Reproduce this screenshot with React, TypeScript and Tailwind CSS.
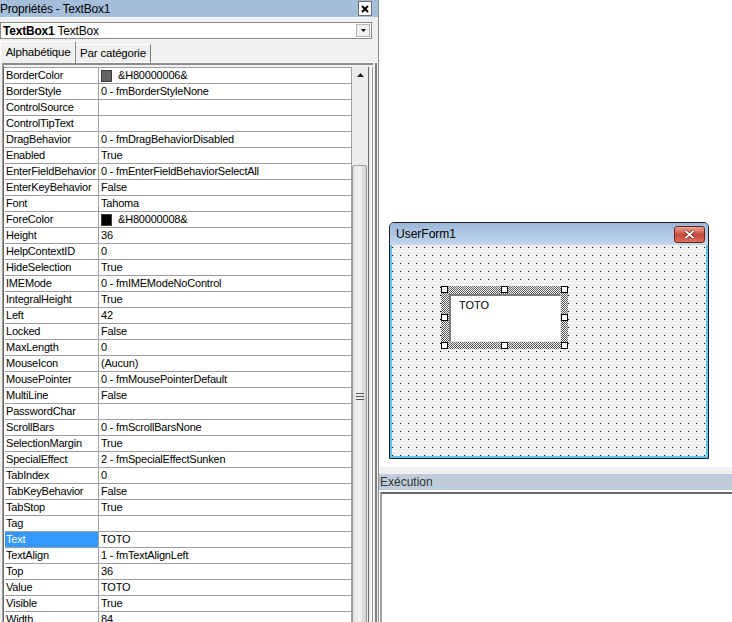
type Row = { name: string; value: string; swatch?: string; selected?: boolean }

const rows: Row[] = [
  { name: 'BorderColor', value: '&H80000006&', swatch: '#646464' },
  { name: 'BorderStyle', value: '0 - fmBorderStyleNone' },
  { name: 'ControlSource', value: '' },
  { name: 'ControlTipText', value: '' },
  { name: 'DragBehavior', value: '0 - fmDragBehaviorDisabled' },
  { name: 'Enabled', value: 'True' },
  { name: 'EnterFieldBehavior', value: '0 - fmEnterFieldBehaviorSelectAll' },
  { name: 'EnterKeyBehavior', value: 'False' },
  { name: 'Font', value: 'Tahoma' },
  { name: 'ForeColor', value: '&H80000008&', swatch: '#000000' },
  { name: 'Height', value: '36' },
  { name: 'HelpContextID', value: '0' },
  { name: 'HideSelection', value: 'True' },
  { name: 'IMEMode', value: '0 - fmIMEModeNoControl' },
  { name: 'IntegralHeight', value: 'True' },
  { name: 'Left', value: '42' },
  { name: 'Locked', value: 'False' },
  { name: 'MaxLength', value: '0' },
  { name: 'MouseIcon', value: '(Aucun)' },
  { name: 'MousePointer', value: '0 - fmMousePointerDefault' },
  { name: 'MultiLine', value: 'False' },
  { name: 'PasswordChar', value: '' },
  { name: 'ScrollBars', value: '0 - fmScrollBarsNone' },
  { name: 'SelectionMargin', value: 'True' },
  { name: 'SpecialEffect', value: '2 - fmSpecialEffectSunken' },
  { name: 'TabIndex', value: '0' },
  { name: 'TabKeyBehavior', value: 'False' },
  { name: 'TabStop', value: 'True' },
  { name: 'Tag', value: '' },
  { name: 'Text', value: 'TOTO', selected: true },
  { name: 'TextAlign', value: '1 - fmTextAlignLeft' },
  { name: 'Top', value: '36' },
  { name: 'Value', value: 'TOTO' },
  { name: 'Visible', value: 'True' },
  { name: 'Width', value: '84' },
]

function PropertyRow({ row }: { row: Row }) {
  return (
    <div className="flex h-[16px] shrink-0 border-b border-[#a0a0a0]">
      <div
        className={`w-[94px] shrink-0 overflow-hidden whitespace-nowrap border-r border-[#a0a0a0] pl-[1px] leading-[15px] ${
          row.selected ? 'bg-[#3399ff] text-white' : ''
        }`}
      >
        {row.name}
      </div>
      <div className="flex min-w-0 flex-1 items-center pl-[2px] leading-[15px]">
        {row.swatch && (
          <span
            className="mr-[6px] h-[12px] w-[11px] shrink-0 border border-[#3a3a3a]"
            style={{ backgroundColor: row.swatch }}
          />
        )}
        <span className="whitespace-nowrap">{row.value}</span>
      </div>
    </div>
  )
}

function ScrollBar() {
  return (
    <div className="relative w-[17px] shrink-0 border-l border-[#a0a0a0] bg-[#ececec]">
      <div className="flex h-[16px] items-center justify-center">
        <svg width="7" height="4" viewBox="0 0 7 4">
          <path d="M0 4 L3.5 0 L7 4 Z" fill="#222" />
        </svg>
      </div>
      <div className="absolute left-0 right-[1px] top-[98px] h-[600px] rounded-t-[2px] border border-[#9a9a9a] bg-gradient-to-r from-[#e2e2e2] via-[#f4f4f4] to-[#cfcfcf]">
        <div className="absolute left-[3px] top-[227px] flex w-[8px] flex-col gap-[2px]">
          <span className="h-[1px] bg-[#555]" />
          <span className="h-[1px] bg-[#555]" />
          <span className="h-[1px] bg-[#555]" />
        </div>
      </div>
    </div>
  )
}

function PropertiesPanel() {
  return (
    <div className="flex h-full w-[379px] shrink-0 flex-col border-r border-[#8e8e8e] bg-[#f0f0f0]">
      <div className="flex h-[17px] shrink-0 items-center justify-between bg-[#a5bfdb] pr-[6px] text-[12px] leading-none tracking-[-0.2px]">
        <span>Propriétés - TextBox1</span>
        <span className="flex h-[15px] w-[14px] items-center justify-center border border-[#6e6e6e] bg-white">
          <svg width="8" height="8" viewBox="0 0 8 8">
            <path d="M1 1 L7 7 M7 1 L1 7" stroke="#000" strokeWidth="2" />
          </svg>
        </span>
      </div>

      <div className="mt-[5px] flex h-[17px] w-[372px] shrink-0 items-center border border-[#8a8a8a] bg-white pl-[2px] text-[12px] tracking-[-0.2px]">
        <span className="flex-1 whitespace-nowrap">
          <b>TextBox1</b> TextBox
        </span>
        <span className="mr-[1px] flex h-[13px] w-[14px] items-center justify-center border border-[#b5b5b5] bg-[#f0f0f0]">
          <svg width="5" height="3" viewBox="0 0 5 3">
            <path d="M0 0 L5 0 L2.5 3 Z" fill="#000" />
          </svg>
        </span>
      </div>

      <div className="mt-[2px] flex h-[22px] shrink-0 items-end text-[11.5px] tracking-[-0.2px]">
        <div className="flex h-[22px] w-[76px] items-center justify-center border-l border-r border-t border-l-white border-r-[#8a8a8a] border-t-white">
          Alphabétique
        </div>
        <div className="flex h-[19px] w-[75px] items-center justify-center border-b border-r border-t border-b-white border-r-[#7a7a7a] border-t-white pt-[1px]">
          Par catégorie
        </div>
        <div className="h-[1px] flex-1 bg-white" />
      </div>

      <div className="flex min-h-0 flex-1">
        <div className="ml-[2px] flex min-h-0 w-[371px] border-l border-t-2 border-l-[#a0a0a0] border-t-[#8c8c8c]">
          <div className="flex min-h-0 flex-1 border-l border-t border-l-[#696969] border-t-[#f0f0f0] pt-[1px]">
            <div className="flex min-w-0 flex-1 flex-col overflow-hidden border-t border-[#a0a0a0] bg-white pl-[1px] text-[11px] tracking-[-0.2px]">
              {rows.map((row) => (
                <PropertyRow key={row.name} row={row} />
              ))}
            </div>
            <ScrollBar />
            <div className="w-[1px] bg-[#696969]" />
            <div className="w-[3px] bg-[#f0f0f0]" />
            <div className="w-[1px] bg-[#a0a0a0]" />
          </div>
        </div>
        <div className="ml-[2px] w-[2px] bg-[#808080]" />
      </div>
    </div>
  )
}

function TextBoxControl() {
  const handles = [
    'left-0 top-0',
    'left-[60px] top-0',
    'left-[120px] top-0',
    'left-0 top-[28px]',
    'left-[120px] top-[28px]',
    'left-0 top-[56px]',
    'left-[60px] top-[56px]',
    'left-[120px] top-[56px]',
  ]

  return (
    <div className="absolute left-[49px] top-[41px] h-[63px] w-[127px] bg-[repeating-conic-gradient(#5a5a5a_0_25%,#f4f4f4_0_50%)] bg-[length:2px_2px]">
      <div className="absolute bottom-[7px] left-[8px] right-[7px] top-[8px] border-b border-l-2 border-r border-t-2 border-b-[#e3e3e3] border-l-[#7a7a7a] border-r-[#e3e3e3] border-t-[#7a7a7a] bg-white pl-[8px] pt-[3px] text-[11px] leading-[13px]">
        TOTO
      </div>
      {handles.map((pos) => (
        <span
          key={pos}
          className={`absolute ${pos} h-[7px] w-[7px] border border-black bg-white`}
        />
      ))}
    </div>
  )
}

function UserForm() {
  return (
    <div className="flex h-[237px] w-[320px] flex-col overflow-hidden rounded-t-[5px] border border-[#1f1f1f] bg-[#5cc3ec]">
      <div className="flex h-[22px] shrink-0 items-center justify-between bg-gradient-to-b from-[#9bb7d9] to-[#c4d8ee] pl-[6px] pr-[3px] text-[12px]">
        <span>UserForm1</span>
        <span className="flex h-[17px] w-[31px] items-center justify-center rounded-[3px] border border-[#6d221b] bg-gradient-to-b from-[#e9a596] via-[#c9493c] to-[#d66f60]">
          <svg width="11" height="9" viewBox="0 0 11 9">
            <path d="M1.5 1 L9.5 8 M9.5 1 L1.5 8" stroke="#5a1a14" strokeWidth="3.2" />
            <path d="M1.5 1 L9.5 8 M9.5 1 L1.5 8" stroke="#fff" strokeWidth="1.8" />
          </svg>
        </span>
      </div>
      <div className="relative mx-[2px] mb-[2px] flex-1 bg-[#f0f0f0]">
        <svg className="absolute inset-0 h-full w-full">
          <defs>
            <pattern id="form-grid" x="0" y="2" width="8" height="8" patternUnits="userSpaceOnUse">
              <rect width="1" height="1" fill="#000" />
            </pattern>
          </defs>
          <rect width="100%" height="100%" fill="url(#form-grid)" />
        </svg>
        <TextBoxControl />
      </div>
    </div>
  )
}

export default function App() {
  return (
    <div className="flex h-[622px] w-[732px] overflow-hidden bg-white font-['Liberation_Sans',Arial,sans-serif] text-black">
      <PropertiesPanel />

      <div className="flex min-w-0 flex-1 flex-col bg-white">
        <div className="h-[467px] shrink-0 pl-[10px] pt-[222px]">
          <UserForm />
        </div>
        <div className="h-[7px] shrink-0 bg-[#f0f0f0]" />
        <div className="flex h-[16px] shrink-0 items-center bg-[#bfcddb] pl-[1px] text-[12px] text-[#333]">
          Exécution
        </div>
        <div className="flex-1 pl-[1px] pt-[2px]">
          <div className="h-full border-l-2 border-t-2 border-l-[#a0a0a0] border-t-[#696969] bg-white" />
        </div>
      </div>
    </div>
  )
}
